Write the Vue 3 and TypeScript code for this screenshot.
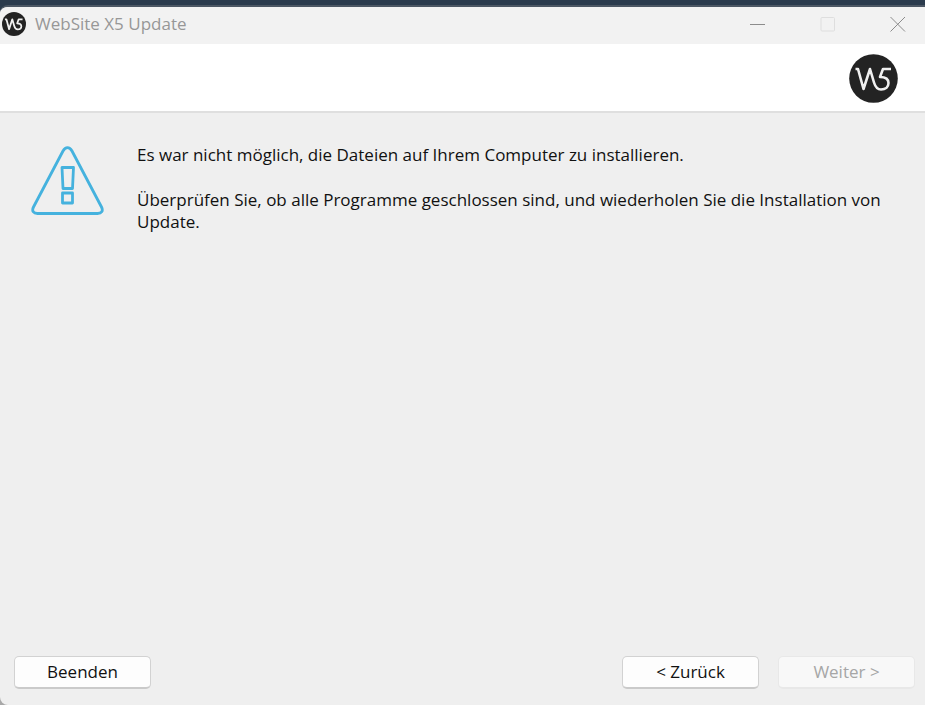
<script setup lang="ts">
import { ref } from 'vue'

const title = 'WebSite X5 Update'
const messages: string[] = [
  'Es war nicht möglich, die Dateien auf Ihrem Computer zu installieren.',
  'Überprüfen Sie, ob alle Programme geschlossen sind, und wiederholen Sie die Installation von Update.',
]
const canContinue = ref(false)
</script>

<template>
  <div class="desktop">
    <main class="window">
      <header class="titlebar">
        <svg class="app-icon" viewBox="0 0 49 49" aria-hidden="true">
          <circle cx="24.500" cy="24.500" r="24.500" fill="#232323" />
          <path class="mark bold" d="M6 15h3l5.500 20 6.500-20 4 13.500c1.500 5 3.500 7 7 7 4.500 0 7.500-2.500 7.500-6.500 0-4-3-6-8.500-6l3-8h8" />
        </svg>
        <h1 class="title">{{ title }}</h1>
        <div class="controls">
          <button class="control" type="button" aria-label="Minimieren">
            <svg viewBox="0 0 16 16"><path d="M0 8.500h15" /></svg>
          </button>
          <button class="control" type="button" aria-label="Maximieren" disabled>
            <svg viewBox="0 0 16 16"><rect x="1" y="1.500" width="13.500" height="13.500" rx="1" /></svg>
          </button>
          <button class="control" type="button" aria-label="Schließen">
            <svg viewBox="0 0 16 16"><path d="M.5 1l14.500 14.500M15 1L.5 15.500" /></svg>
          </button>
        </div>
      </header>

      <div class="banner">
        <svg class="logo" viewBox="0 0 49 49" aria-hidden="true">
          <circle cx="24.500" cy="24.500" r="24.300" fill="#232323" />
          <path class="mark" d="M6.500 15H9l5.500 20 6.500-20 4 13.500c1.500 5 3.500 7 7 7 4.500 0 7.500-2.500 7.500-6.500 0-4-3-6-8.500-6l3-8h8" />
        </svg>
      </div>

      <section class="content">
        <svg class="warning" viewBox="0 0 74 70" aria-hidden="true">
          <path d="M32 5 2.500 61c-2 4 0 6.500 4 6.500h60c4 0 6-2.500 4-6.500L41 5c-2.500-4.500-6.500-4.500-9 0z" />
          <path d="M31 21.500h11.500l-1 21h-9.500zM31.500 47h10v10h-10z" />
        </svg>
        <div class="message">
          <p v-for="message in messages" :key="message">{{ message }}</p>
        </div>
      </section>

      <footer class="actions">
        <button class="action quit" type="button">Beenden</button>
        <button class="action" type="button">&lt; Zurück</button>
        <button class="action" type="button" :disabled="!canContinue">Weiter &gt;</button>
      </footer>
    </main>
  </div>
</template>

<style>
body {
  background: #2b3b4d;
}
</style>

<style scoped>
.desktop {
  box-sizing: border-box;
  display: flex;
  min-height: 100vh;
  padding-top: 5px;
  background: linear-gradient(#2b3b4d 50%, #a8a8a8 50%);
  font-family: "Open Sans", "Noto Sans", sans-serif;
}

.window {
  flex: 1;
  display: flex;
  flex-direction: column;
  border-top: 2px solid #4c5764;
  border-radius: 8px 0 0 8px;
  overflow: hidden;
  background: #efefef;
}

.titlebar {
  box-sizing: border-box;
  display: flex;
  align-items: center;
  height: 37px;
  padding: 0 0 3px 2px;
  background: #f2f2f2;
}

.app-icon {
  width: 24px;
  height: 24px;
}

.mark {
  fill: none;
  stroke: #f0f0f0;
  stroke-width: 2.6;
  stroke-linejoin: round;
}

.bold {
  stroke-width: 3.6;
}

.title {
  flex: 1;
  margin: 0 0 0 9px;
  color: #979797;
  font-size: 17px;
  font-weight: 400;
  line-height: 34px;
}

.controls {
  display: flex;
  margin-right: -8px;
}

.control {
  width: 70px;
  height: 34px;
  padding: 0;
  border: 0;
  background: none;
  color: #8c8c8c;
}

.control:disabled {
  color: #dedede;
}

.control svg {
  display: block;
  width: 16px;
  height: 16px;
  margin: 0 auto;
  fill: none;
  stroke: currentColor;
}

.banner {
  display: flex;
  justify-content: flex-end;
  padding: 10px 27px 8px;
  border-bottom: 2px solid #dfdfdf;
  background: #fff;
}

.logo {
  width: 49px;
  height: 49px;
}

.content {
  flex: 1;
  display: flex;
  gap: 32px;
  padding: 31px 40px 31px 31px;
}

.warning {
  flex: none;
  width: 74px;
  height: 70px;
  margin-top: 2px;
  fill: none;
  stroke: #45b2de;
  stroke-width: 2.8;
  stroke-linejoin: round;
}

.message {
  flex: 1;
  color: #111;
  font-size: 17px;
  line-height: 22px;
}

.message p {
  margin: 0 0 23px;
}

.actions {
  display: flex;
  gap: 19px;
  padding: 0 10px 16px 14px;
}

.action {
  width: 137px;
  height: 33px;
  padding: 0;
  border: 1px solid #d2d2d2;
  border-bottom: 2px solid #cacaca;
  border-radius: 5px;
  background: #fdfdfd;
  color: #111;
  font: inherit;
  font-size: 17px;
  line-height: 24px;
}

.action:disabled {
  border-color: #e8e8e8;
  background: #f8f8f8;
  color: #a6a6a6;
}

.quit {
  margin-right: auto;
}
</style>
